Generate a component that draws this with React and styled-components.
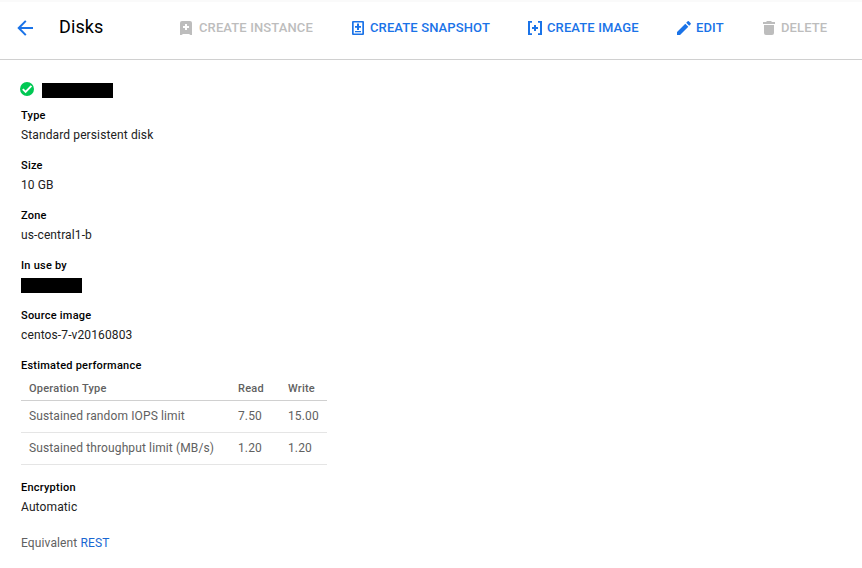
import React from 'react';
import styled, { createGlobalStyle } from 'styled-components';

const GlobalStyle = createGlobalStyle`
  * { box-sizing: border-box; }
  body {
    margin: 0;
    background: #fff;
    color: #212121;
    font-family: Roboto, "Liberation Sans", sans-serif;
    font-size: 12px;
    letter-spacing: 0.12px;
  }
`;

const Page = styled.div`
  width: 862px;
  height: 568px;
  overflow: hidden;
  background: #fff;
`;

const Toolbar = styled.header`
  display: flex;
  align-items: center;
  height: 60px;
  padding: 0 0 6px 17px;
  border-top: 2px solid #fafafa;
  border-bottom: 1px solid #d0d0d0;
`;

const BackButton = styled.button`
  display: flex;
  width: 42px;
  padding: 0;
  border: 0;
  background: none;
  color: #1a73e8;
`;

const Title = styled.h1`
  width: 118px;
  margin: 0;
  padding-bottom: 2px;
  color: #000;
  font-size: 18px;
  font-weight: 400;
  line-height: 24px;
  letter-spacing: 0.1px;
`;

const Actions = styled.nav`
  display: grid;
  grid-template-columns: 172px 177px 149px 85px 80px;
`;

const Action = styled.button`
  display: flex;
  align-items: center;
  gap: ${(p) => p.$gap || 3}px;
  padding: 0;
  border: 0;
  background: none;
  color: ${(p) => (p.$muted ? '#bdbdbd' : '#1a73e8')};
  font: 500 13px/18px Roboto, "Liberation Sans", sans-serif;
  letter-spacing: 0.12px;
  white-space: nowrap;
`;

const Glyph = styled.svg`
  display: block;
  flex: none;
  fill: currentColor;
`;

const Content = styled.main`
  padding: 18px 21px 0;
`;

const NameRow = styled.div`
  display: flex;
  align-items: center;
  gap: 8px;
  height: 22px;
  margin-left: -1px;
`;

const Redacted = styled.span`
  display: block;
  width: ${(p) => p.$width}px;
  height: 15px;
  margin-top: ${(p) => p.$drop}px;
  background: #000;
`;

const Field = styled.section`
  height: ${(p) => p.$height || 50}px;
  padding-top: 6px;
`;

const Label = styled.h2`
  margin: 0;
  color: #000;
  font-size: 11px;
  font-weight: 500;
  line-height: 20px;
  letter-spacing: 0.23px;
`;

const Value = styled.div`
  line-height: 20px;
  margin-top: -1px;
`;

const Table = styled.table`
  width: 306px;
  border-collapse: collapse;
  table-layout: fixed;
  color: #616161;
`;

const Column = styled.col`
  width: ${(p) => p.$width}px;
`;

const HeadCell = styled.th`
  height: 24px;
  padding: 1px 8px 0;
  border-bottom: 1px solid #d0d0d0;
  font-size: 11px;
  font-weight: 500;
  letter-spacing: 0.23px;
  text-align: left;
`;

const Cell = styled.td`
  height: 32px;
  padding: 0 8px;
  border-bottom: 1px solid #e5e5e5;
  white-space: nowrap;
`;

const Equivalent = styled.p`
  margin: 0;
  padding-top: 1px;
  color: #616161;
  line-height: 20px;
`;

const Link = styled.a`
  color: #1967d2;
  text-decoration: none;
`;

const InstanceIcon = () => (
  <Glyph width="18" height="18" viewBox="0 0 18 18">
    <path fillRule="evenodd" d="M5 2h8a2 2 0 0 1 2 2v12h-1.500L12 15H6l-1.500 1H3V4a2 2 0 0 1 2-2zM8 5v2H6v2h2v2h2V9h2V7h-2V5z" />
  </Glyph>
);

const SnapshotIcon = () => (
  <Glyph width="18" height="18" viewBox="0 0 18 18">
    <path fillRule="evenodd" d="M4 2h10a1 1 0 0 1 1 1v12a1 1 0 0 1-1 1H4a1 1 0 0 1-1-1V3a1 1 0 0 1 1-1zM4.700 3.500v11h8.600v-11zM8 4.500h2V7h2v1.700h-2V11H8V8.700H6V7h2zM6 12h6v1.300H6z" />
  </Glyph>
);

const ImageIcon = () => (
  <Glyph width="18" height="18" viewBox="0 0 18 18">
    <path d="M2 2h4v1.700H4v10.600h2V16H2zM12 2h4v14h-4v-1.700h2V3.700h-2zM8 6h2v2h2v2h-2v2H8v-2H6V8h2z" />
  </Glyph>
);

const EditIcon = () => (
  <Glyph width="18" height="18" viewBox="0 0 18 18">
    <path d="M2 13v3h3l8.300-8.300-3-3zM15.700 5.300a.8.8 0 0 0 0-1.100l-1.900-1.900a.8.8 0 0 0-1.100 0l-1.500 1.500 3 3z" />
  </Glyph>
);

const DeleteIcon = () => (
  <Glyph width="18" height="18" viewBox="0 0 18 18">
    <path d="M4 6h10v8a2 2 0 0 1-2 2H6a2 2 0 0 1-2-2zM3 3h3l1-1h4l1 1h3v2H3z" />
  </Glyph>
);

const BackIcon = () => (
  <Glyph width="17" height="16" viewBox="0 0 17 16">
    <path d="M16 7H4.200l5.300-5.400L8.100.2.300 8l7.800 7.800 1.400-1.400L4.200 9H16z" />
  </Glyph>
);

const StatusIcon = () => (
  <Glyph width="14" height="14" viewBox="0 0 14 14">
    <circle cx="7" cy="7" r="7" fill="#00c853" />
    <path d="M2.800 7.100l2.800 2.800 5.800-6" fill="none" stroke="#fff" strokeWidth="1.900" />
  </Glyph>
);

const actions = [
  { label: 'CREATE INSTANCE', Icon: InstanceIcon, muted: true, gap: 4 },
  { label: 'CREATE SNAPSHOT', Icon: SnapshotIcon },
  { label: 'CREATE IMAGE', Icon: ImageIcon },
  { label: 'EDIT', Icon: EditIcon },
  { label: 'DELETE', Icon: DeleteIcon, muted: true },
];

const limits = [
  ['Sustained random IOPS limit', '7.50', '15.00'],
  ['Sustained throughput limit (MB/s)', '1.20', '1.20'],
];

export default function App() {
  return (
    <Page>
      <GlobalStyle />
      <Toolbar>
        <BackButton aria-label="Back"><BackIcon /></BackButton>
        <Title>Disks</Title>
        <Actions>
          {actions.map(({ label, Icon, muted, gap }) => (
            <Action key={label} $muted={muted} $gap={gap} disabled={muted}><Icon />{label}</Action>
          ))}
        </Actions>
      </Toolbar>
      <Content>
        <NameRow><StatusIcon /><Redacted $width={71} $drop={2} /></NameRow>
        <Field><Label>Type</Label><Value>Standard persistent disk</Value></Field>
        <Field><Label>Size</Label><Value>10 GB</Value></Field>
        <Field><Label>Zone</Label><Value>us-central1-b</Value></Field>
        <Field><Label>In use by</Label><Redacted $width={61} $drop={2} /></Field>
        <Field><Label>Source image</Label><Value>centos-7-v20160803</Value></Field>
        <Field $height={122}>
          <Label>Estimated performance</Label>
          <Table>
            <colgroup><Column $width={209} /><Column $width={50} /><Column $width={47} /></colgroup>
            <thead>
              <tr><HeadCell>Operation Type</HeadCell><HeadCell>Read</HeadCell><HeadCell>Write</HeadCell></tr>
            </thead>
            <tbody>
              {limits.map(([name, read, write]) => (
                <tr key={name}><Cell>{name}</Cell><Cell>{read}</Cell><Cell>{write}</Cell></tr>
              ))}
            </tbody>
          </Table>
        </Field>
        <Field $height={60}><Label>Encryption</Label><Value>Automatic</Value></Field>
        <Equivalent>Equivalent <Link>REST</Link></Equivalent>
      </Content>
    </Page>
  );
}
